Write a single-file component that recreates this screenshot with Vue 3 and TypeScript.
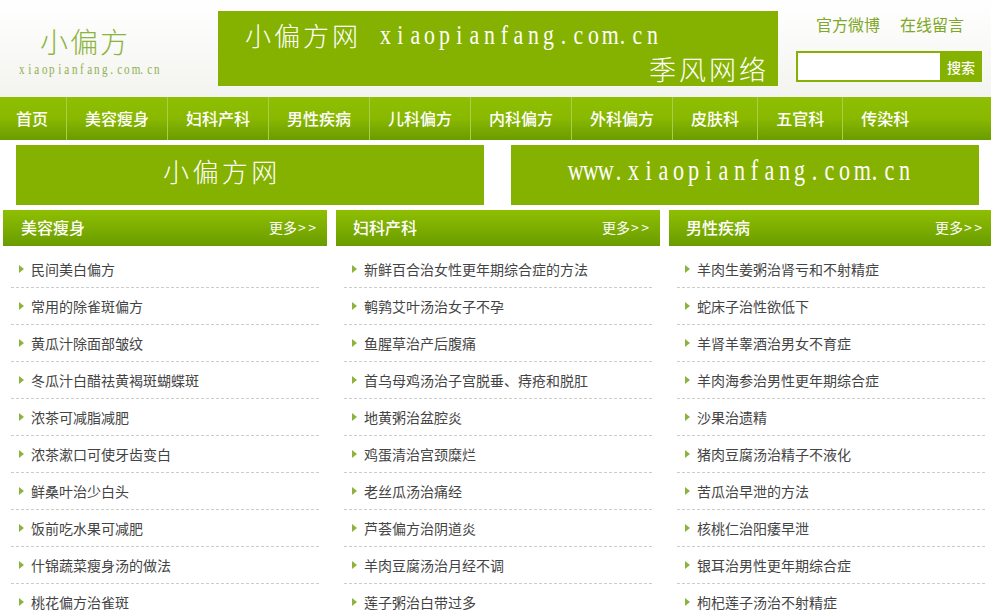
<script setup lang="ts">
interface Column { title: string; items: string[] }

const navItems: string[] = ['首页', '美容瘦身', '妇科产科', '男性疾病', '儿科偏方', '内科偏方', '外科偏方', '皮肤科', '五官科', '传染科']

const chars = (s: string): string[] => s.split('')

const columns: Column[] = [
  {
    title: '美容瘦身',
    items: ['民间美白偏方', '常用的除雀斑偏方', '黄瓜汁除面部皱纹', '冬瓜汁白醋祛黄褐斑蝴蝶斑', '浓茶可减脂减肥', '浓茶漱口可使牙齿变白', '鲜桑叶治少白头', '饭前吃水果可减肥', '什锦蔬菜瘦身汤的做法', '桃花偏方治雀斑']
  },
  {
    title: '妇科产科',
    items: ['新鲜百合治女性更年期综合症的方法', '鹌鹑艾叶汤治女子不孕', '鱼腥草治产后腹痛', '首乌母鸡汤治子宫脱垂、痔疮和脱肛', '地黄粥治盆腔炎', '鸡蛋清治宫颈糜烂', '老丝瓜汤治痛经', '芦荟偏方治阴道炎', '羊肉豆腐汤治月经不调', '莲子粥治白带过多']
  },
  {
    title: '男性疾病',
    items: ['羊肉生姜粥治肾亏和不射精症', '蛇床子治性欲低下', '羊肾羊睾酒治男女不育症', '羊肉海参治男性更年期综合症', '沙果治遗精', '猪肉豆腐汤治精子不液化', '苦瓜治早泄的方法', '核桃仁治阳痿早泄', '银耳治男性更年期综合症', '枸杞莲子汤治不射精症']
  }
]
</script>

<template>
  <div class="page">
    <header class="top">
      <div class="logo">
        <div class="logo-cn">小偏方</div>
        <div class="logo-en mono"><span v-for="(c, i) in chars('xiaopianfang.com.cn')" :key="i">{{ c }}</span></div>
      </div>
      <div class="top-banner">
        <div class="tb-line1"><span class="tb-cn">小偏方网</span><span class="tb-en mono"><span v-for="(c, i) in chars('xiaopianfang.com.cn')" :key="i">{{ c }}</span></span></div>
        <div class="tb-line2">季风网络</div>
      </div>
      <div class="tools">
        <div class="links">
          <a>官方微博</a>
          <a>在线留言</a>
        </div>
        <div class="search">
          <input class="search-input" type="text" />
          <button class="search-btn" type="button">搜索</button>
        </div>
      </div>
    </header>

    <nav class="nav">
      <a v-for="item in navItems" :key="item" class="nav-item">{{ item }}</a>
    </nav>

    <section class="banners">
      <div class="banner banner-left">小偏方网</div>
      <div class="banner banner-right mono"><span v-for="(c, i) in chars('www.xiaopianfang.com.cn')" :key="i">{{ c }}</span></div>
    </section>

    <main class="columns">
      <section v-for="col in columns" :key="col.title" class="column">
        <div class="col-head">
          <h2 class="col-title">{{ col.title }}</h2>
          <a class="col-more">更多<span class="arrows">&gt;&gt;</span></a>
        </div>
        <ul class="col-list">
          <li v-for="it in col.items" :key="it" class="col-item">{{ it }}</li>
        </ul>
      </section>
    </main>
  </div>
</template>

<style>
html, body { margin: 0; overflow: hidden; background: #fff; }
</style>

<style scoped>
.page {
  width: 991px;
  height: 615px;
  overflow: hidden;
  font-family: "Noto Sans CJK SC", "Liberation Sans", sans-serif;
}
.mono {
  font-family: "Liberation Serif", "Noto Sans CJK SC", serif;
  white-space: nowrap;
}
.mono span {
  display: inline-block;
  width: 0.53em;
  text-align: center;
  transform: scaleX(0.78);
}
.top {
  height: 97px;
  display: flex;
  background: linear-gradient(#ffffff, #f3f3ef);
}
.logo {
  width: 218px;
  flex: none;
  padding: 23px 0 0 18px;
  box-sizing: border-box;
}
.logo-cn {
  font-size: 28px;
  line-height: 36px;
  padding-left: 22px;
  letter-spacing: 2px;
  color: #8cb43c;
  font-weight: 300;
}
.logo-en {
  font-size: 14.2px;
  line-height: 20px;
  color: #8fb050;
}
.top-banner {
  width: 560px;
  height: 75px;
  flex: none;
  margin-top: 11px;
  background: #85b200;
  color: #fff;
  box-sizing: border-box;
  padding: 6px 9px 0 27px;
}
.tb-line1 {
  display: flex;
  align-items: center;
  height: 35px;
}
.tb-cn {
  font-size: 26px;
  letter-spacing: 3px;
  width: 133px;
  font-weight: 300;
}
.tb-en {
  font-size: 28px;
}
.tb-line2 {
  font-size: 27px;
  line-height: 34px;
  letter-spacing: 3px;
  text-align: right;
  font-weight: 300;
}
.tools {
  flex: 1;
  padding: 14px 0 0 18px;
}
.links {
  display: flex;
  gap: 20px;
  height: 21px;
  padding-left: 20px;
  font-size: 16px;
  line-height: 21px;
  color: #7fa828;
}
.search {
  display: flex;
  width: 186px;
  height: 31px;
  margin-top: 16px;
  background: #85b200;
  box-sizing: border-box;
  padding: 2px 0 2px 2px;
}
.search-input {
  width: 142px;
  flex: none;
  border: 0;
  padding: 0;
  background: #fff;
  outline: none;
}
.search-btn {
  flex: 1;
  border: 0;
  padding: 0;
  background: transparent;
  color: #fff;
  font-family: inherit;
  font-size: 14px;
  font-weight: 500;
}
.nav {
  height: 43px;
  display: flex;
  background: linear-gradient(#8fbf02, #89b800 50%, #6a9c00);
}
.nav-item {
  padding: 0 18px;
  border-right: 1px solid #a9cf4a;
  font-size: 16px;
  font-weight: 500;
  line-height: 43px;
  color: #fff;
}
.nav-item:first-child { padding-left: 16px; }
.nav-item:last-child { border-right: 0; }
.banners {
  display: flex;
  gap: 27px;
  padding: 5px 0 0 16px;
}
.banner {
  width: 468px;
  height: 60px;
  flex: none;
  background: #85b200;
  color: #fff;
  display: flex;
  align-items: center;
  box-sizing: border-box;
}
.banner-left {
  padding: 0 0 10px 147px;
  font-size: 26px;
  letter-spacing: 3.4px;
  font-weight: 300;
}
.banner-right {
  padding: 0 0 8px 55px;
  font-size: 28.4px;
}
.columns {
  display: flex;
  gap: 9px;
  padding: 5px 0 0 3px;
}
.column {
  width: 324px;
  flex: none;
}
.col-head {
  height: 36px;
  display: flex;
  align-items: center;
  justify-content: space-between;
  padding: 0 11px 2px 17px;
  box-sizing: border-box;
  background: linear-gradient(#8fbf02, #6a9c00);
  color: #fff;
}
.column:first-child .col-head { padding-left: 18px; }
.col-title {
  margin: 0;
  font-size: 16px;
  font-weight: 500;
}
.col-more {
  font-size: 14px;
  white-space: nowrap;
}
.arrows {
  letter-spacing: 2.5px;
  margin-right: -2.5px;
  margin-left: 1px;
}
.col-list {
  list-style: none;
  margin: 0;
  padding: 5px 8px 0;
}
.col-item {
  position: relative;
  height: 36px;
  line-height: 36px;
  padding-left: 20px;
  border-bottom: 1px dashed #ccc;
  font-size: 14px;
  color: #444;
}
.col-item::before {
  content: "";
  position: absolute;
  left: 8px;
  top: 14px;
  border-left: 5px solid #8cb43c;
  border-top: 4px solid transparent;
  border-bottom: 4px solid transparent;
}
</style>
